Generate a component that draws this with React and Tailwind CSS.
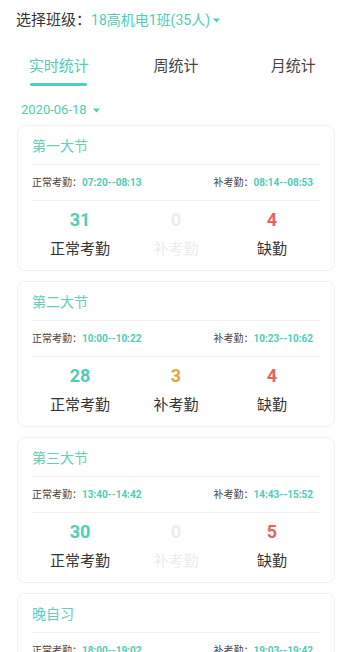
import React from 'react';

const font = { fontFamily: '"Roboto", "Noto Sans CJK SC", sans-serif' };

const sessions = [
  { name: '第一大节', normal: '07:20--08:13', makeup: '08:14--08:53', ok: 31, late: 0, absent: 4 },
  { name: '第二大节', normal: '10:00--10:22', makeup: '10:23--10:62', ok: 28, late: 3, absent: 4 },
  { name: '第三大节', normal: '13:40--14:42', makeup: '14:43--15:52', ok: 30, late: 0, absent: 5 },
  { name: '晚自习', normal: '18:00--19:02', makeup: '19:03--19:42', ok: 32, late: 0, absent: 3 },
];

function Caret() {
  return (
    <svg width="7" height="5" viewBox="0 0 7 5" className="ml-[3px] inline-block">
      <path d="M0 0.5h7L3.5 4.5z" fill="#4ecdb8" />
    </svg>
  );
}

function SessionCard({ s }) {
  return (
    <div className="mx-[17px] mb-[10px] rounded-[8px] border border-[#f0f0f0] bg-white px-[14px] pt-[10px] pb-[10px]">
      <div className="h-[20px] leading-[20px] text-[14px] text-[#5fd0bd]">{s.name}</div>
      <div className="mt-[8px] border-t border-[#f3f3f3]" />
      <div className="flex h-[35px] items-center justify-between pr-[7px] text-[10px]">
        <div>
          <span className="text-[#444]">正常考勤：</span>
          <span className="font-bold text-[#4ecdb8]">{s.normal}</span>
        </div>
        <div>
          <span className="text-[#444]">补考勤：</span>
          <span className="font-bold text-[#4ecdb8]">{s.makeup}</span>
        </div>
      </div>
      <div className="border-t border-[#f3f3f3]" />
      <div className="grid grid-cols-3 pt-[7px] text-center">
        <div>
          <div className="h-[24px] leading-[24px] text-[18px] font-bold text-[#4ecdb8]">{s.ok}</div>
          <div className="mt-[6px] h-[22px] leading-[22px] text-[15px] text-[#333]">正常考勤</div>
        </div>
        <div>
          <div className={`h-[24px] leading-[24px] text-[18px] font-bold ${s.late ? 'text-[#e8a53a]' : 'text-[#ececec]'}`}>{s.late}</div>
          <div className={`mt-[6px] h-[22px] leading-[22px] text-[15px] ${s.late ? 'text-[#333]' : 'text-[#ececec]'}`}>补考勤</div>
        </div>
        <div>
          <div className="h-[24px] leading-[24px] text-[18px] font-bold text-[#eb6060]">{s.absent}</div>
          <div className="mt-[6px] h-[22px] leading-[22px] text-[15px] text-[#333]">缺勤</div>
        </div>
      </div>
    </div>
  );
}

export default function App() {
  return (
    <div className="h-[652px] overflow-hidden bg-white" style={font}>
      <div className="flex h-[40px] items-center pl-[16px] pt-[1px]">
        <span className="text-[15px] text-[#333]">选择班级：</span>
        <span className="text-[14px] text-[#4ecdb8]">18高机电1班(35人)</span>
        <Caret />
      </div>
      <div className="mt-[12px] grid grid-cols-3">
        <div className="flex flex-col items-center">
          <div className="h-[28px] leading-[28px] text-[15px] text-[#4ecdb8]">实时统计</div>
          <div className="mt-[3px] h-[3px] w-[57px] rounded-full bg-[#4ecdb8]" />
        </div>
        <div className="h-[28px] text-center leading-[28px] text-[15px] text-[#444]">周统计</div>
        <div className="h-[28px] text-center leading-[28px] text-[15px] text-[#444]">月统计</div>
      </div>
      <div className="flex h-[34px] items-center pl-[21px] pt-[13px] text-[13px] text-[#4ecdb8]">
        2020-06-18
        <span className="ml-[3px]"><Caret /></span>
      </div>
      <div className="pt-[5px]">
        {sessions.map((s) => (
          <SessionCard key={s.name} s={s} />
        ))}
      </div>
    </div>
  );
}
